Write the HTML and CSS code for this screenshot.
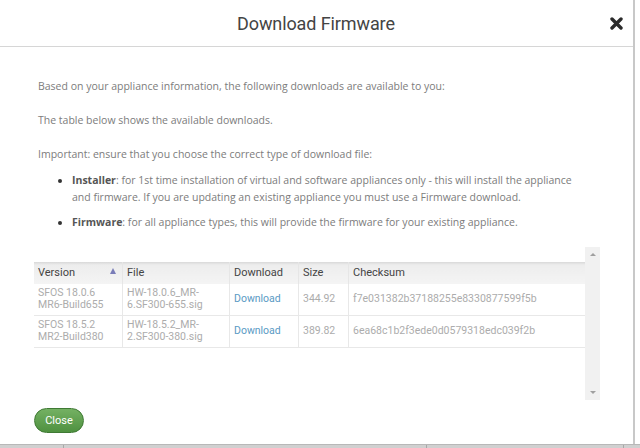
FILE: index.html
```html
<!DOCTYPE html>
<html>
<head>
<meta charset="utf-8">
<link rel="stylesheet" href="styles.css">
</head>
<body>
<div class="dialog">
  <div class="header">
    <h1 class="title">Download Firmware</h1>
    <svg class="close-x" width="13" height="13" viewBox="0 0 13 13"><path d="M2 2 L11 11 M11 2 L2 11" stroke="#2a2a2a" stroke-width="3.4" stroke-linecap="round"/></svg>
  </div>
  <div class="content">
    <p class="para">Based on your appliance information, the following downloads are available to you:</p>
    <p class="para">The table below shows the available downloads.</p>
    <p class="para tight">Important: ensure that you choose the correct type of download file:</p>
    <ul class="list">
      <li><b>Installer</b>: for 1st time installation of virtual and software appliances only - this will install the appliance and firmware. If you are updating an existing appliance you must use a Firmware download.</li>
      <li><b>Firmware</b>: for all appliance types, this will provide the firmware for your existing appliance.</li>
    </ul>
    <div class="grid-wrap">
      <div class="grid-scroll">
        <table class="grid">
          <thead>
            <tr>
              <th class="c-ver">Version<span class="sort"></span></th>
              <th class="c-file">File</th>
              <th class="c-dl">Download</th>
              <th class="c-size">Size</th>
              <th class="c-sum">Checksum</th>
            </tr>
          </thead>
          <tbody>
            <tr>
              <td>SFOS 18.0.6<br>MR6-Build655</td>
              <td>HW-18.0.6_MR-<br>6.SF300-655.sig</td>
              <td><a class="link">Download</a></td>
              <td>344.92</td>
              <td>f7e031382b37188255e8330877599f5b</td>
            </tr>
            <tr>
              <td>SFOS 18.5.2<br>MR2-Build380</td>
              <td>HW-18.5.2_MR-<br>2.SF300-380.sig</td>
              <td><a class="link">Download</a></td>
              <td>389.82</td>
              <td>6ea68c1b2f3ede0d0579318edc039f2b</td>
            </tr>
          </tbody>
        </table>
      </div>
      <div class="scrollbar">
        <span class="arr up"></span>
        <span class="arr down"></span>
      </div>
    </div>
    <button class="btn-close">Close</button>
  </div>
</div>
<div class="footer-strip">
  <span class="seg s1"></span><span class="seg s2"></span><span class="seg s3"></span><span class="seg s4"></span>
</div>
</body>
</html>
```
FILE: styles.css
```css
html, body {
  margin: 0;
  padding: 0;
  background: #ffffff;
}
body {
  width: 640px;
  height: 448px;
  overflow: hidden;
  font-family: Roboto, "Liberation Sans", sans-serif;
  display: flex;
  flex-direction: column;
}
.dialog {
  width: 635px;
  height: 445px;
  border-right: 2px solid #c8c8c8;
  box-sizing: border-box;
  display: flex;
  flex-direction: column;
}
.header {
  height: 47px;
  border-bottom: 1px solid #d6d6d6;
  box-sizing: border-box;
  display: flex;
  align-items: center;
}
.title {
  margin: 0 0 0 237px;
  font-size: 18px;
  font-weight: 400;
  color: #444;
  letter-spacing: -0.1px;
}
.close-x {
  margin-left: auto;
  margin-right: 10px;
}
.content {
  padding: 31px 0 0 38px;
  width: 552px;
  display: flex;
  flex-direction: column;
}
.para {
  margin: 0 0 18px 0;
  font-family: "Open Sans", Roboto, sans-serif;
  font-size: 10.5px;
  line-height: 16px;
  color: #7c7c7c;
}
.para.tight {
  margin-bottom: 10px;
}
.list {
  margin: 0;
  padding: 0 0 0 34px;
  font-family: "Open Sans", Roboto, sans-serif;
  color: #7c7c7c;
  font-size: 10.5px;
  line-height: 16.5px;
}
.list li {
  margin-bottom: 9px;
}
.list li::marker {
  color: #333;
}
.list b {
  color: #555;
  font-weight: 700;
}
.grid-wrap {
  margin: 7px 0 0 -4px;
  width: 566px;
  height: 153px;
  display: flex;
}
.grid-scroll {
  flex: 1;
  padding-top: 15px;
}
.grid {
  width: 100%;
  border-collapse: collapse;
  font-size: 10.5px;
}
.grid th {
  height: 22px;
  text-align: left;
  font-weight: 400;
  color: #444;
  padding: 0 4px;
  background: linear-gradient(#d8d8d8 0px, #ededed 3px, #f4f4f4 100%);
  border-left: 1px solid #e6e6e6;
  font-size: 11px;
  position: relative;
}
.grid th:first-child { border-left: none; }
.grid td {
  height: 31px;
  padding: 0 4px;
  color: #acacac;
  line-height: 12px;
  border-left: 1px solid #e8e8e8;
  border-bottom: 1px solid #e8e8e8;
  vertical-align: middle;
  font-size: 10.5px;
}
.grid td:first-child { border-left: none; }
.c-ver { width: 80px; }
.c-file { width: 98px; }
.c-dl { width: 60px; }
.c-size { width: 41px; }
.sort {
  position: absolute;
  right: 6px;
  top: 6px;
  width: 0;
  height: 0;
  border-left: 3.5px solid transparent;
  border-right: 3.5px solid transparent;
  border-bottom: 6px solid #7a7db8;
}
.link {
  color: #5a9ac4;
}
.scrollbar {
  width: 15px;
  background: #f1f1f1;
  display: flex;
  flex-direction: column;
  justify-content: space-between;
  align-items: center;
  padding: 6px 0;
  box-sizing: border-box;
}
.arr {
  width: 0;
  height: 0;
  border-left: 3px solid transparent;
  border-right: 3px solid transparent;
}
.arr.up { border-bottom: 3px solid #a0a0a0; }
.arr.down { border-top: 3px solid #a0a0a0; }
.btn-close {
  margin: 8px 0 0 -4px;
  width: 50px;
  height: 25px;
  border-radius: 13px;
  border: 1px solid #3f7a34;
  background: linear-gradient(#74b163, #4f9140);
  color: #fff;
  font-family: Roboto, "Liberation Sans", sans-serif;
  font-size: 11px;
  padding: 0;
}
.footer-strip {
  height: 3px;
  background: #d0d0d0;
  border-top: 1px solid #b8b8b8;
  display: flex;
}
.seg { border-right: 1px solid #a8a8a8; }
.s1 { width: 63px; }
.s2 { width: 362px; }
.s3 { width: 196px; }
.s4 { flex: 1; border-right: none; }
```
